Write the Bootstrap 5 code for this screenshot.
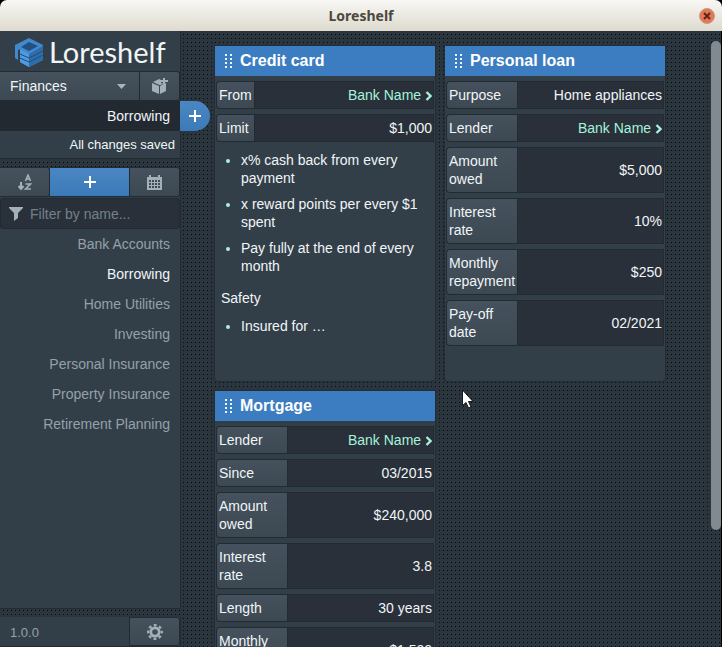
<!DOCTYPE html>
<html lang="en" data-bs-theme="dark">
<head>
<meta charset="utf-8">
<meta name="viewport" content="width=device-width, initial-scale=1">
<title>Loreshelf</title>
<link href="https://cdn.jsdelivr.net/npm/bootstrap@5.3.0/dist/css/bootstrap.min.css" rel="stylesheet">
<style>
:root { --ground:#2b353e; --panel:#333f48; --deep:#293039; --edge:#222a32; --blue:#3b7dc0; --text:#f0f5f8; --muted:#a3afb9; --mint:#a5f3dc; --raise:linear-gradient(#45525d,#3c4852); }
body { font:14px/18px "Liberation Sans",Arial,sans-serif; color:var(--text); background:#000; }
button, input, select { font:inherit; color:inherit; }
.titlebar { height:31px; background:linear-gradient(#f8f7f4,#dedace); border-radius:7px 7px 0 0; color:#4c4840; font:bold 14px/31px "Noto Sans","Open Sans",sans-serif; }
.close-btn { right:7px; top:8px; width:16px; height:16px; }
.workspace { min-height:0; border-right:1px solid #000; background-color:var(--ground); background-image:linear-gradient(90deg,var(--ground) 3px,transparent 3px),linear-gradient(var(--ground) 3px,#06090c 3px); background-size:4px 4px; }
.sidebar { width:181px; gap:8px; }
.panel { background:var(--panel); border-right:1px solid var(--edge); border-bottom:1px solid var(--edge); }
.brand { height:40px; padding:2px 0 0 14px; }
.brand-name { font:29px/40px Lato,sans-serif; margin-left:5px; }
.bar { height:30px; }
.tool { background:var(--raise); border:1px solid var(--edge); border-left:0; color:var(--muted); padding:0; border-radius:0 3px 3px 0; }
.tool-blue { background:linear-gradient(#4a87c2,#3b7ab9); color:#fff; border-radius:0; }
.tool-narrow { width:40px; }
.tool-wide { width:50px; }
.book-select { appearance:none; border-radius:0; padding:0 10px; color:var(--text); }
.caret { right:14px; top:13px; pointer-events:none; }
.current { background:#232931; height:30px; padding:0 10px; line-height:30px; }
.add-tab { left:180px; top:0; width:30px; height:30px; padding:0; border:0; border-radius:0 15px 15px 0; background:linear-gradient(#4a87c2,#3b7ab9); color:#fff; }
.status { font-size:13px; line-height:27px; padding:0 5px; }
.filter { height:31px; margin-top:1px; background:var(--deep); border:1px solid var(--edge); border-radius:3px; }
.filter input { background:none; border:0; outline:0; min-width:0; margin-left:7px; padding:0; }
.filter input::placeholder { color:#73808b; opacity:1; }
.shelf a { display:block; line-height:30px; padding:0 10px; color:#94a1ab; text-decoration:none; }
.shelf a.current-page { color:var(--text); }
.version { font-size:13px; color:#94a1ab; padding-left:10px; line-height:32px; }
.gear-btn { width:51px; border-left:1px solid var(--edge); }
.board { grid-template-columns:repeat(auto-fill,220px); gap:10px; padding:15px 15px 0 34px; align-content:start; }
.note { background:var(--panel); border-radius:0 0 4px 4px; padding-bottom:30px; box-shadow:0 0 1px 1px #252e36; min-width:0; }
.note-head { height:30px; background:var(--blue); color:#eef9ff; padding-left:10px; gap:8px; }
.note-head h2 { font-size:16px; line-height:30px; font-weight:bold; margin:0; }
.facts { width:calc(100% - 2px); margin-left:1px; border-collapse:separate; border-spacing:0 5px; }
.facts th, .facts td { border:1px solid var(--edge); padding:4px 2px; }
.facts th { width:1%; font-weight:normal; background:var(--raise); border-radius:4px 0 0 4px; border-right:0; }
.facts td { background:var(--deep); text-align:right; padding-right:1px; }
.facts a { color:var(--mint); text-decoration:none; }
.prose { padding:4px 6px 0; }
.prose ul { padding-left:20px; margin:0 0 14px; }
.prose li { margin-bottom:8px; }
.prose li::marker { color:var(--mint); }
.prose p { margin:0 0 10px; }
.thumb { right:0; top:10px; width:10px; height:489px; border-radius:5px; background:#8b9399e6; }
.pointer { left:461px; top:389px; }
svg { display:block; flex-shrink:0; }
.next { display:inline-block; vertical-align:-1px; }
</style>
</head>
<body class="vh-100 overflow-hidden d-flex flex-column position-relative">
<svg width="0" height="0" class="position-absolute" aria-hidden="true">
  <symbol id="grip" viewBox="0 0 7 15"><path fill="currentColor" d="M0 0h2v2H0zM5 0h2v2H5zM0 4h2v2H0zM5 4h2v2H5zM0 8h2v2H0zM5 8h2v2H5zM0 12h2v2H0zM5 12h2v2H5z"/></symbol>
  <symbol id="plus" viewBox="0 0 12 12"><path fill="currentColor" d="M5 0h2v5h5v2H7v5H5V7H0V5h5z"/></symbol>
  <symbol id="next" viewBox="0 0 7 10"><path d="M1.500 1l4 4-4 4" fill="none" stroke="currentColor" stroke-width="2.300"/></symbol>
</svg>
<header class="titlebar text-center position-relative flex-shrink-0">Loreshelf
  <button class="close-btn position-absolute border-0 p-0 bg-transparent" aria-label="Close"><svg width="16" height="16" viewBox="0 0 16 16"><circle cx="8" cy="8" r="7.500" fill="#ea7550" stroke="#b5a08f"/><path d="M5 5l6 6M11 5l-6 6" stroke="#57291c" stroke-width="2"/></svg></button>
</header>
<div class="workspace flex-grow-1 d-flex position-relative overflow-hidden">
  <aside class="sidebar d-flex flex-column flex-shrink-0">
    <div class="panel">
      <div class="brand d-flex align-items-center">
        <svg width="30" height="31" viewBox="0 0 30 31"><path fill="#4189cf" d="M15 1l14 7v15l-14 7-9-5V12l-2 1v10l-3-2V8z"/><path fill="#244f7e" d="M15 5l9 4-9 5-8-4z"/><path fill="#2f6cab" d="M15 17l14-8v14l-14 7z"/><path fill="#4f9be2" d="M6 12l9 5v13l-9-5z"/><path d="M6 17l9 4 14-7M6 21l9 4 14-7" fill="none" stroke="#234c79"/></svg>
        <span class="brand-name">Loreshelf</span>
      </div>
      <div class="bar d-flex">
        <div class="position-relative flex-grow-1 d-flex">
          <select class="tool book-select w-100" aria-label="Notebook"><option>Finances</option></select>
          <svg class="caret position-absolute" width="9" height="5" viewBox="0 0 9 5"><path fill="#a9b5be" d="M0 0h9L4.500 5z"/></svg>
        </div>
        <button class="tool tool-narrow d-flex align-items-center justify-content-center" aria-label="New notebook"><svg width="16" height="16" viewBox="0 0 16 16" fill="currentColor"><path d="M0 5l7 3v8l-7-3zM8 8l6-3v8l-6 3zM1 4l6-3 2 1v3l3 1-4.500 1z"/><path d="M11 0h2v2h3v2h-3v2h-2V4H9V2h2z"/></svg></button>
      </div>
      <div class="current text-end position-relative">Borrowing
        <button class="add-tab position-absolute d-flex align-items-center justify-content-center" aria-label="Add card"><svg width="12" height="12"><use href="#plus"/></svg></button>
      </div>
      <div class="status text-end">All changes saved</div>
    </div>
    <div class="panel flex-grow-1">
      <div class="bar d-flex">
        <button class="tool tool-wide d-flex align-items-center justify-content-center" aria-label="Sort by name"><svg width="14" height="16" viewBox="0 0 14 16" fill="none" stroke="currentColor"><path d="M3 8v7M0.500 12L3 15l2.500-3" stroke-width="2"/><path d="M7.500 7L10 1l2.500 6M8.500 5h3M7.500 10h5l-5 5h5.500" stroke-width="1.600"/></svg></button>
        <button class="tool tool-blue flex-grow-1 d-flex align-items-center justify-content-center" aria-label="Add page"><svg width="12" height="12"><use href="#plus"/></svg></button>
        <button class="tool tool-wide d-flex align-items-center justify-content-center" aria-label="Calendar"><svg width="15" height="15" viewBox="0 0 15 15" fill="currentColor" fill-rule="evenodd"><path d="M0 2h2V0h2v2h7V0h2v2h2v13H0zM2 5v2h2V5zM5 5v2h2V5zM8 5v2h2V5zM11 5v2h2V5zM2 8v2h2V8zM5 8v2h2V8zM8 8v2h2V8zM11 8v2h2V8zM2 11v2h2v-2zM5 11v2h2v-2zM8 11v2h2v-2zM11 11v2h2v-2z"/></svg></button>
      </div>
      <div class="filter d-flex align-items-center"><svg class="ms-2" width="14" height="14" viewBox="0 0 14 14"><path fill="#a3afb9" d="M0 0h14v1L9 6v5l-4 3V6L0 1z"/></svg><input class="flex-grow-1" type="text" placeholder="Filter by name..." aria-label="Filter by name"></div>
      <nav class="shelf text-end" aria-label="Pages">
        <a href="#">Bank Accounts</a><a href="#" class="current-page" aria-current="page">Borrowing</a><a href="#">Home Utilities</a><a href="#">Investing</a><a href="#">Personal Insurance</a><a href="#">Property Insurance</a><a href="#">Retirement Planning</a>
      </nav>
    </div>
    <footer class="panel bar d-flex justify-content-between">
      <span class="version">1.0.0</span>
      <button class="tool gear-btn d-flex align-items-center justify-content-center" aria-label="Settings"><svg width="16" height="16" viewBox="0 0 16 16"><g fill="none" stroke="#a3afb9"><circle cx="8" cy="8" r="4.200" stroke-width="2.800"/><circle cx="8" cy="8" r="6.800" stroke-width="2.400" stroke-dasharray="2.800 2.540" stroke-dashoffset="1.400"/></g></svg></button>
    </footer>
  </aside>
  <main class="board d-grid flex-grow-1">
    <section class="note">
      <div class="note-head d-flex align-items-center"><svg width="7" height="15"><use href="#grip"/></svg><h2>Credit card</h2></div>
      <table class="facts">
        <tr><th scope="row">From</th><td><a href="#">Bank Name <svg class="next" width="7" height="10"><use href="#next"/></svg></a></td></tr>
        <tr><th scope="row">Limit</th><td>$1,000</td></tr>
      </table>
      <div class="prose">
        <ul><li>x% cash back from every payment</li><li>x reward points per every $1 spent</li><li>Pay fully at the end of every month</li></ul>
        <p>Safety</p>
        <ul class="mb-0"><li>Insured for …</li></ul>
      </div>
    </section>
    <section class="note">
      <div class="note-head d-flex align-items-center"><svg width="7" height="15"><use href="#grip"/></svg><h2>Personal loan</h2></div>
      <table class="facts">
        <tr><th scope="row">Purpose</th><td>Home appliances</td></tr>
        <tr><th scope="row">Lender</th><td><a href="#">Bank Name <svg class="next" width="7" height="10"><use href="#next"/></svg></a></td></tr>
        <tr><th scope="row">Amount owed</th><td>$5,000</td></tr>
        <tr><th scope="row">Interest rate</th><td>10%</td></tr>
        <tr><th scope="row">Monthly repayment</th><td>$250</td></tr>
        <tr><th scope="row">Pay-off date</th><td>02/2021</td></tr>
      </table>
    </section>
    <section class="note">
      <div class="note-head d-flex align-items-center"><svg width="7" height="15"><use href="#grip"/></svg><h2>Mortgage</h2></div>
      <table class="facts">
        <tr><th scope="row">Lender</th><td><a href="#">Bank Name <svg class="next" width="7" height="10"><use href="#next"/></svg></a></td></tr>
        <tr><th scope="row">Since</th><td>03/2015</td></tr>
        <tr><th scope="row">Amount owed</th><td>$240,000</td></tr>
        <tr><th scope="row">Interest rate</th><td>3.8</td></tr>
        <tr><th scope="row">Length</th><td>30 years</td></tr>
        <tr><th scope="row">Monthly repayment</th><td>$1,500</td></tr>
      </table>
    </section>
  </main>
  <div class="thumb position-absolute"></div>
</div>
<svg class="pointer position-absolute" width="13" height="20" viewBox="0 0 13 20"><path fill="#fff" stroke="#14191e" d="M1.500 1v15.500L5 13.500l2.500 5.500 2.500-1-2.500-5.500h4.500z"/></svg>
<script src="https://cdn.jsdelivr.net/npm/bootstrap@5.3.0/dist/js/bootstrap.bundle.min.js"></script>
</body>
</html>
